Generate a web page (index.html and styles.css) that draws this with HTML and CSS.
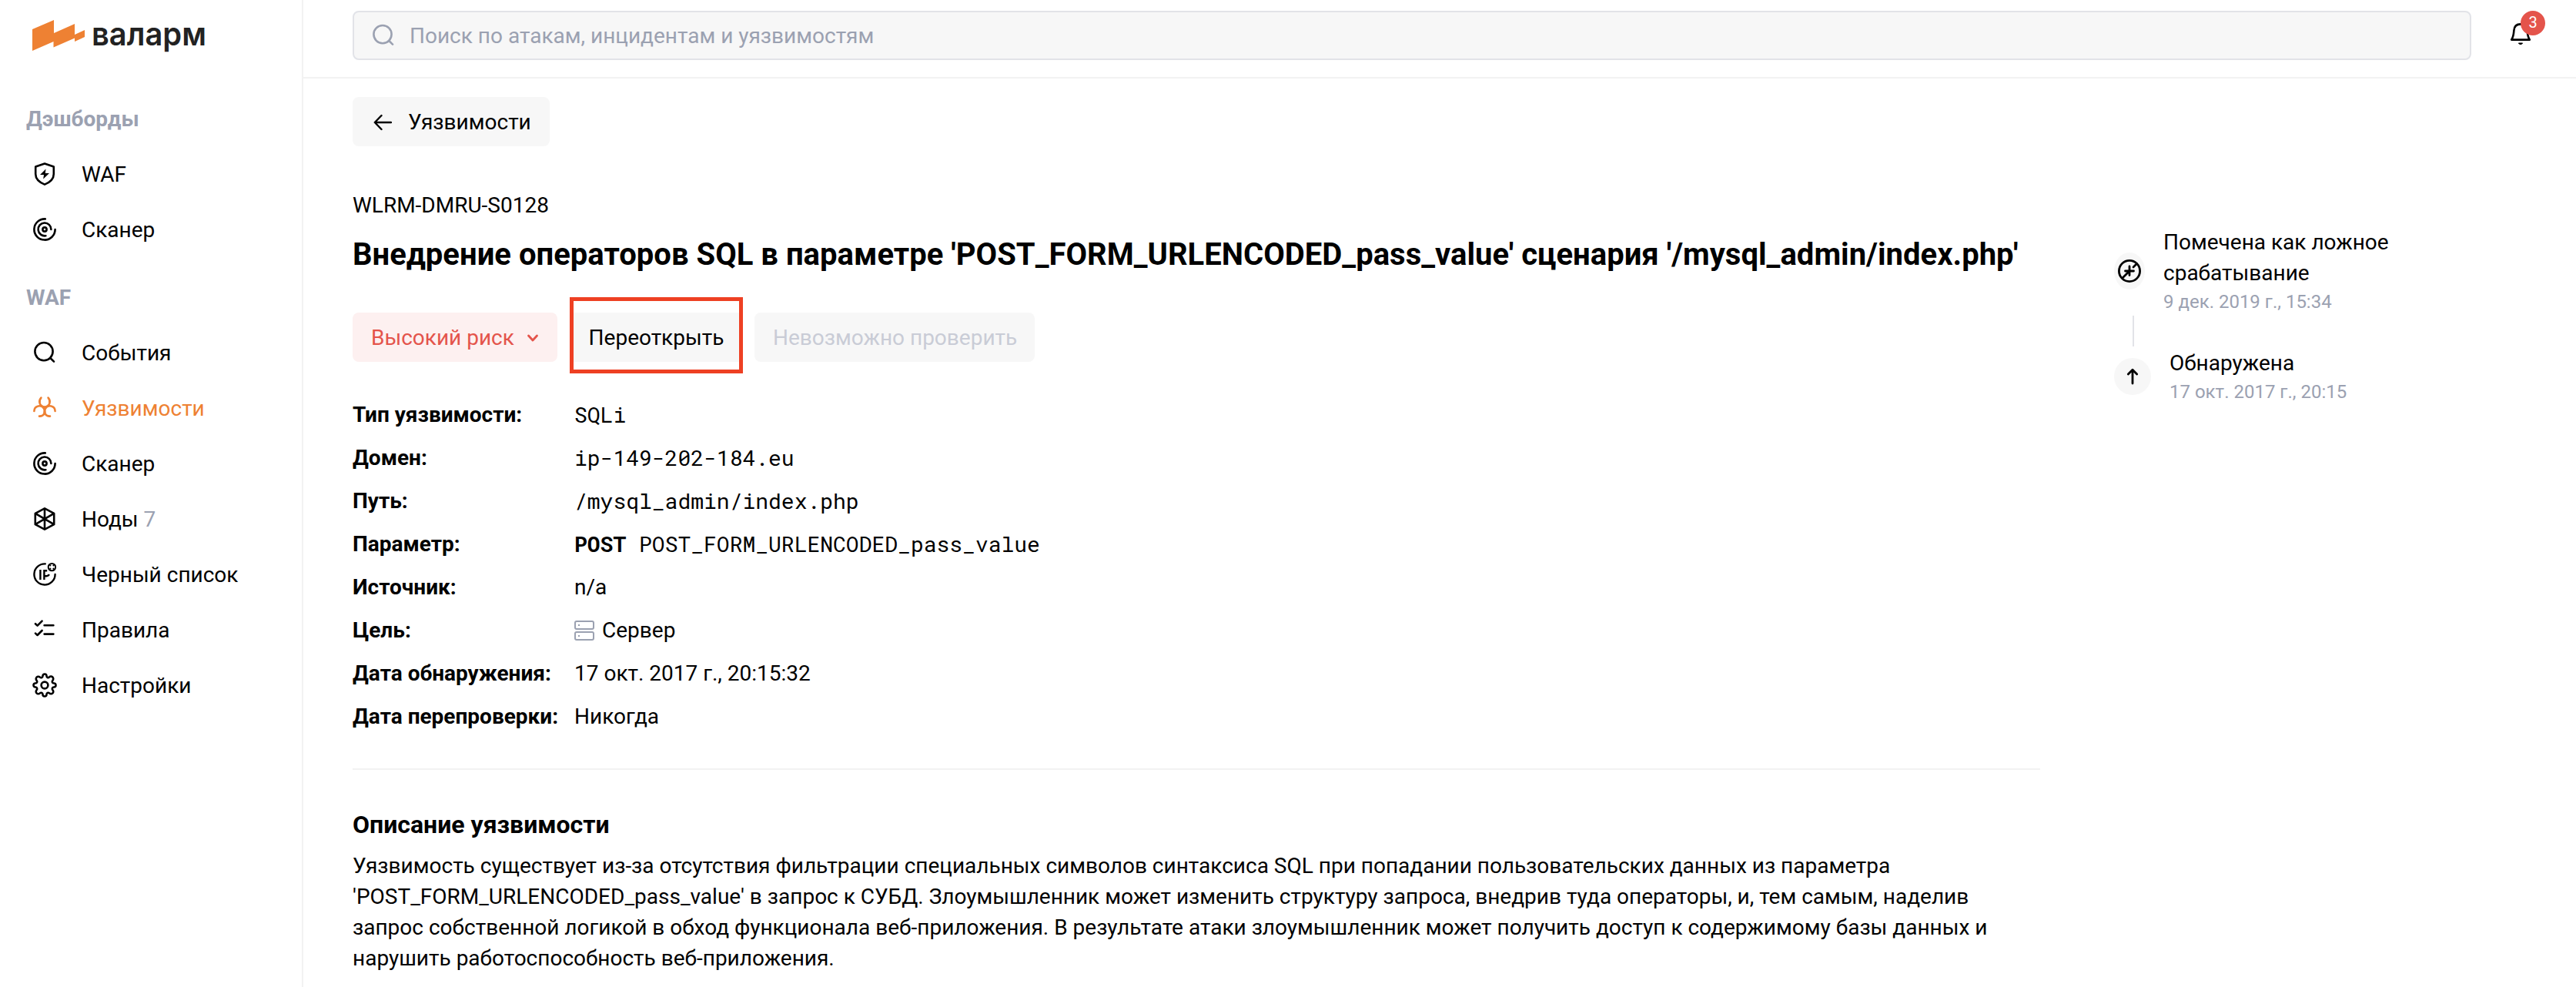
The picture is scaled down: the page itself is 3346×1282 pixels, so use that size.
FILE: index.html
```html
<!DOCTYPE html>
<html lang="ru">
<head>
<meta charset="utf-8">
<title>Валарм — Уязвимости</title>
<link rel="stylesheet" href="styles.css">
</head>
<body>
<svg class="sprite" aria-hidden="true">
  <symbol id="i-scanner" viewBox="0 0 32 32">
    <g fill="none" stroke="currentColor" stroke-width="2.6" stroke-linecap="round">
      <path d="M16.8 2.4A13.6 13.6 0 1 0 29.6 16"/>
      <path d="M17.4 24.2A8.4 8.4 0 1 1 24.4 16"/>
      <circle cx="16" cy="16" r="2.6"/>
    </g>
  </symbol>
  <symbol id="i-search" viewBox="0 0 32 32">
    <g fill="none" stroke="currentColor" stroke-width="2.6" stroke-linecap="round">
      <circle cx="15" cy="14.6" r="11.6"/>
      <path d="M23 22.8l5 4.8"/>
    </g>
  </symbol>
</svg>
<div class="app">
  <aside class="sidebar">
    <div class="logo">
      <svg class="logo-mark" viewBox="0 0 68 40"><path fill="#ee8133" d="M0 12L28 0V17L55 5V19L68 13V22L55 28V23.500L27.500 35.500V28L0 40z"/></svg>
      <svg class="logo-word" viewBox="0 0 160 60"><text x="0" y="42" textLength="149" lengthAdjust="spacingAndGlyphs">валарм</text></svg>
    </div>
    <nav>
      <h4>Дэшборды</h4>
      <a><svg viewBox="0 0 32 32"><path d="M16 2.600L27.800 6.600V16c0 6-4.800 10.800-11.800 13.600C9 26.800 4.200 22 4.200 16V6.600z" fill="none" stroke="currentColor" stroke-width="2.600" stroke-linejoin="round"/><path d="M17.500 9.500L10 17h5l-.8 5.500L22 15h-5.200z" fill="currentColor"/></svg>WAF</a>
      <a><svg><use href="#i-scanner"/></svg>Сканер</a>
    </nav>
    <nav>
      <h4>WAF</h4>
      <a><svg><use href="#i-search"/></svg>События</a>
      <a class="active"><svg viewBox="0 0 32 32"><g fill="none" stroke="currentColor" stroke-width="2.600" stroke-linecap="round"><path d="M11.400 2.600C7.600 7 9 13.500 16 14.600c7-1.100 8.400-7.600 4.600-12"/><path d="M2.400 20c.2-7.500 9.600-9 12.800-3.200C18 22 14.400 27 9 26.600"/><path d="M29.600 20c-.2-7.500-9.600-9-12.800-3.200C14 22 17.600 27 23 26.600"/></g></svg>Уязвимости</a>
      <a><svg><use href="#i-scanner"/></svg>Сканер</a>
      <a><svg viewBox="0 0 32 32"><g fill="none" stroke="currentColor" stroke-width="2.600" stroke-linejoin="round"><path d="M16 2.400L28.200 8.800V23.200L16 29.600 3.800 23.200V8.800z"/><path d="M16 2.400V29.600M3.800 8.800L28.200 23.200M28.200 8.800L3.800 23.200"/></g></svg>Ноды <span class="count">7</span></a>
      <a><svg viewBox="0 0 32 32"><g fill="none" stroke="currentColor" stroke-width="2.400"><path stroke-linecap="round" d="M16.800 2.400A13.600 13.600 0 1 0 29.600 16"/><path d="M10.400 10v13M15.400 23V11.200h3.800M15.400 18.200h3.200q2.400-.2 3.400-2"/><circle cx="25.400" cy="6.600" r="4.700" stroke-width="2"/><path stroke-width="1.800" d="M22.200 3.400l1.800 1.800M28.600 3.400l-1.800 1.800M22.200 9.800L24 8M28.600 9.800L26.800 8"/></g></svg>Черный список</a>
      <a><svg viewBox="0 0 32 32"><g fill="none" stroke="currentColor" stroke-width="2.600" stroke-linecap="round" stroke-linejoin="round"><path d="M4 8.200l2.600 2.400 6-6M4 20.600L6.600 23l6-6M15.600 10.200H27.400M15.600 21.600H27.400"/></g></svg>Правила</a>
      <a><svg viewBox="0 0 32 32"><g fill="none" stroke="currentColor" stroke-width="2.600" stroke-linejoin="round"><circle cx="16" cy="16" r="4.400"/><path d="M13.500 4a2.500 2.500 0 0 1 5 0c0 2 2 2.800 3.500 1.600a2.500 2.500 0 0 1 4.400 4.200C25 11.500 26 13.500 28 13.500a2.500 2.500 0 0 1 0 5c-2 0-3 2-1.600 3.700a2.500 2.500 0 0 1-4.200 4.200c-1.700-1.400-3.700-.4-3.700 1.600a2.500 2.500 0 0 1-5 0c0-2-2-3-3.700-1.600a2.500 2.500 0 0 1-4.200-4.200C7 20.500 6 18.500 4 18.500a2.500 2.500 0 0 1 0-5c2 0 3-2 1.600-3.700a2.500 2.500 0 0 1 4.200-4.200C11.500 7 13.500 6 13.500 4z"/></g></svg>Настройки</a>
    </nav>
  </aside>
  <div class="page">
    <header class="topbar">
      <div class="search"><svg><use href="#i-search"/></svg><span>Поиск по атакам, инцидентам и уязвимостям</span></div>
      <div class="bell">
        <svg viewBox="0 0 32 36"><path d="M4.200 26.600C7 22.500 7 19 7.400 14.600 7.800 9 11.200 6.400 16 6.400s8.200 2.600 8.600 8.200c.4 4.400.4 7.900 3.200 12z" fill="none" stroke="#000" stroke-width="2.600" stroke-linejoin="round"/><path d="M13.400 31a2.800 2.400 0 0 0 5.200 0z" fill="#000" stroke="#000" stroke-linejoin="round"/></svg>
        <span class="badge">3</span>
      </div>
    </header>
    <div class="content">
      <main>
        <a class="btn back"><svg viewBox="0 0 24 24"><path d="M10.500 3L1.800 12l8.700 9M2 12h21" fill="none" stroke="#000" stroke-width="2.400" stroke-linecap="round" stroke-linejoin="round"/></svg>Уязвимости</a>
        <div class="vuln-id">WLRM-DMRU-S0128</div>
        <h1>Внедрение операторов SQL в параметре 'POST_FORM_URLENCODED_pass_value' сценария '/mysql_admin/index.php'</h1>
        <div class="actions">
          <a class="btn risk">Высокий риск<svg viewBox="0 0 16 16"><path d="M2.500 5L8 11l5.500-6" fill="none" stroke="currentColor" stroke-width="2.800" stroke-linecap="round" stroke-linejoin="round"/></svg></a>
          <div class="highlight"><a class="btn">Переоткрыть</a></div>
          <a class="btn disabled">Невозможно проверить</a>
        </div>
        <dl>
          <dt>Тип уязвимости:</dt><dd class="mono">SQLi</dd>
          <dt>Домен:</dt><dd class="mono">ip-149-202-184.eu</dd>
          <dt>Путь:</dt><dd class="mono">/mysql_admin/index.php</dd>
          <dt>Параметр:</dt><dd class="mono"><b>POST</b> POST_FORM_URLENCODED_pass_value</dd>
          <dt>Источник:</dt><dd>n/a</dd>
          <dt>Цель:</dt><dd class="target"><svg viewBox="0 0 26 26"><g fill="none" stroke="#9ba1b1" stroke-width="2"><rect x="1" y="1" width="24" height="10" rx="2"/><rect x="1" y="15" width="24" height="10" rx="2"/></g><path fill="#9ba1b1" d="M5 5h2v2H5zM5 19h2v2H5z"/></svg>Сервер</dd>
          <dt>Дата обнаружения:</dt><dd>17 окт. 2017 г., 20:15:32</dd>
          <dt>Дата перепроверки:</dt><dd>Никогда</dd>
        </dl>
        <section>
          <h2>Описание уязвимости</h2>
          <p>Уязвимость существует из-за отсутствия фильтрации специальных символов синтаксиса SQL при попадании пользовательских данных из параметра<br>'POST_FORM_URLENCODED_pass_value' в запрос к СУБД. Злоумышленник может изменить структуру запроса, внедрив туда операторы, и, тем самым, наделив<br>запрос собственной логикой в обход функционала веб-приложения. В результате атаки злоумышленник может получить доступ к содержимому базы данных и<br>нарушить работоспособность веб-приложения.</p>
        </section>
      </main>
      <aside class="timeline">
        <div class="event">
          <span class="dot narrow"><svg viewBox="0 0 32 32"><g fill="none" stroke="#000" stroke-width="2.800" stroke-linecap="round"><circle cx="16" cy="16" r="13.600"/><path d="M16 10v11.500M10.500 16h11M7 25l9-9M21 11l4.500-4.500"/></g></svg></span>
          <div>Помечена как ложное<br>срабатывание<time>9 дек. 2019 г., 15:34</time></div>
        </div>
        <div class="link"></div>
        <div class="event">
          <span class="dot"><svg viewBox="0 0 32 32"><path d="M16 25V7.500M10.300 13L16 7.200 21.700 13" fill="none" stroke="#000" stroke-width="2.800" stroke-linecap="round" stroke-linejoin="round"/></svg></span>
          <div>Обнаружена<time>17 окт. 2017 г., 20:15</time></div>
        </div>
      </aside>
    </div>
  </div>
</div>
</body>
</html>
```
FILE: styles.css
```css
* { box-sizing: border-box; }
body {
  margin: 0;
  background: #fff;
  color: #000;
  font: 28px/40px Roboto, "Noto Sans", sans-serif;
}
h1, h2, h4, p, dl, dd { margin: 0; }
svg { display: block; flex: none; }
.sprite { display: none; }
.app { display: flex; height: 1282px; overflow: hidden; }

.sidebar { width: 394px; flex: none; border-right: 2px solid #f2f2f2; }
.logo { display: flex; gap: 9px; padding: 26px 0 0 42px; height: 119px; }
.logo-mark { width: 68px; height: 40px; }
.logo-word { width: 160px; height: 60px; margin-top: -9px; }
.logo-word text { font: 600 42px Inter, sans-serif; fill: #222; }
.sidebar nav { margin-bottom: 16px; }
.sidebar h4 {
  height: 72px;
  padding-left: 34px;
  font-size: 28px;
  line-height: 72px;
  font-weight: 700;
  color: #9ba1b1;
}
.sidebar a {
  display: flex;
  align-items: center;
  height: 72px;
  padding-left: 42px;
  white-space: pre;
}
.sidebar a svg { width: 32px; height: 32px; margin: -2px 32px 0 0; }
.sidebar .active { color: #ee8133; }
.count { color: #9ba1b1; }

.page { flex: 1; min-width: 0; }
.topbar {
  display: flex;
  height: 102px;
  padding: 14px 0 0 64px;
  border-bottom: 2px solid #f2f2f2;
}
.search {
  display: flex;
  align-items: center;
  width: 2752px;
  height: 64px;
  padding-left: 22px;
  border: 2px solid #e2e3e8;
  border-radius: 8px;
  background: #f7f7f7;
  color: #9ba1b1;
}
.search svg { width: 32px; height: 32px; margin-right: 18px; }
.search span { padding-top: 2px; }
.bell { position: relative; margin: 11px 0 0 48px; }
.bell svg { width: 32px; height: 36px; }
.badge {
  position: absolute;
  left: 16px;
  top: -11px;
  width: 32px;
  height: 32px;
  border-radius: 50%;
  background: #e4544b;
  color: #fff;
  font-size: 20px;
  line-height: 31px;
  text-align: center;
}

.content { display: flex; padding: 24px 0 0 64px; }
main { width: 2192px; }
.btn {
  display: flex;
  align-items: center;
  width: max-content;
  height: 64px;
  padding: 1px 24px 0;
  border-radius: 8px;
  background: #f7f7f7;
}
.back { width: 256px; }
.back svg { width: 24px; height: 24px; margin: 0 21px 0 3px; }
.vuln-id { margin-top: 57px; }
h1 {
  margin-top: 19px;
  font-size: 40px;
  line-height: 50px;
  font-weight: 700;
  letter-spacing: .02px;
  white-space: nowrap;
}
.actions { display: flex; align-items: flex-start; height: 100px; margin-top: 30px; }
.actions > .btn { margin-top: 20px; }
.risk { width: 266px; background: #fdf0f0; color: #e4544b; }
.risk svg { width: 16px; height: 16px; margin-left: 16px; }
.highlight {
  width: 225px;
  height: 99px;
  margin: 0 15px 0 16px;
  padding-top: 15px;
  border: 5px solid #ee4023;
}
.highlight .btn { width: 100%; padding: 1px 0 0; justify-content: center; border-radius: 0; }
.disabled { width: 364px; color: #c9ccd6; white-space: nowrap; }
dl {
  display: grid;
  grid-template-columns: 288px 1fr;
  row-gap: 16px;
  margin-top: 33px;
  padding-bottom: 47px;
  border-bottom: 2px solid #f2f2f2;
}
dt { font-weight: 700; white-space: nowrap; }
.mono { font-family: "Roboto Mono", "DejaVu Sans Mono", monospace; }
.target { display: flex; align-items: center; gap: 10px; }
.target svg { width: 26px; height: 26px; }
section { padding-top: 49px; }
h2 { font-size: 32px; line-height: 44px; font-weight: 700; margin-bottom: 12px; }
p { white-space: nowrap; }

.timeline { padding: 169px 0 0 96px; }
.event { display: flex; align-items: center; gap: 24px; }
.dot {
  display: flex;
  align-items: center;
  justify-content: center;
  width: 48px;
  height: 48px;
  border-radius: 50%;
  background: #f7f7f7;
}
.narrow { width: 40px; }
.dot svg { width: 32px; height: 32px; }
time { display: block; font-size: 24px; line-height: 34px; color: #9ba1b1; }
.link { width: 2px; height: 40px; margin: 1px 0 2px 24px; background: #e2e3e8; }
```
